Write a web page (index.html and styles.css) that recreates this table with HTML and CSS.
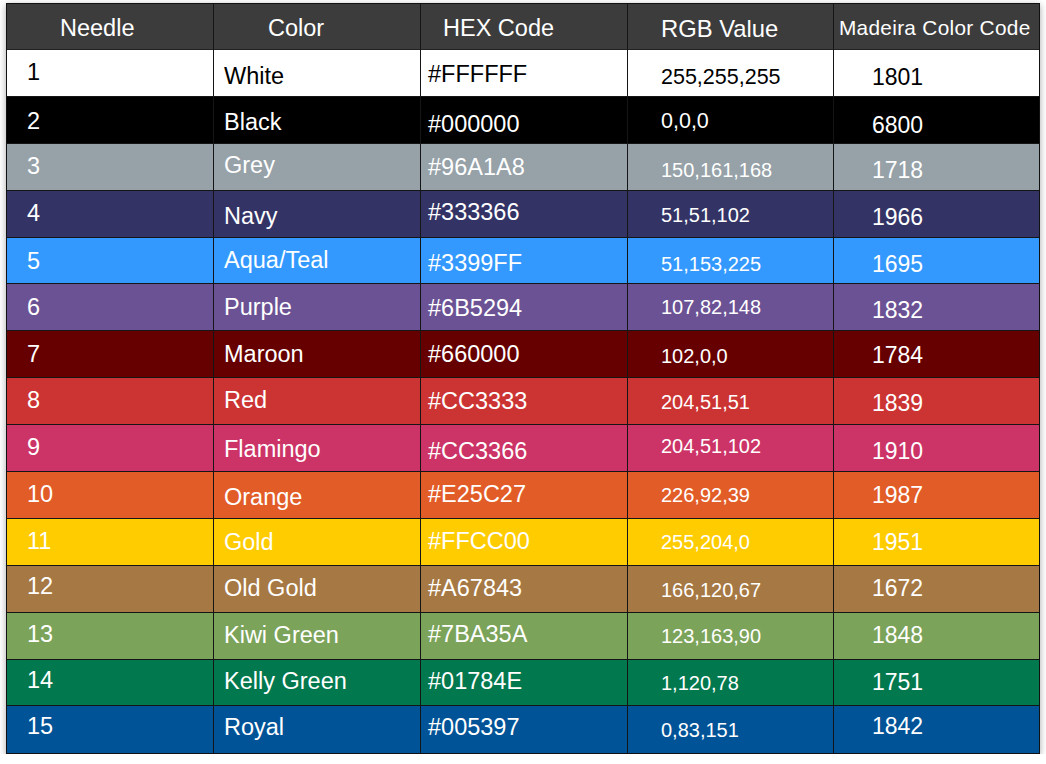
FILE: index.html
```html
<!DOCTYPE html>
<html>
<head>
<meta charset="utf-8">
<link rel="stylesheet" href="styles.css">
</head>
<body>
<div class="sheet">
  <div class="grid">
    <div class="cell head h1">Needle</div>
    <div class="cell head h2">Color</div>
    <div class="cell head h3">HEX Code</div>
    <div class="cell head h4">RGB Value</div>
    <div class="cell head h5">Madeira Color Code</div>

    <div class="cell c1 r1">1</div><div class="cell c2 r1 d4">White</div><div class="cell c3 r1 d2">#FFFFFF</div><div class="cell c4 r1 rgb-lg d5">255,255,255</div><div class="cell c5 r1 d5">1801</div>
    <div class="cell c1 r2 d2">2</div><div class="cell c2 r2 d3">Black</div><div class="cell c3 r2 d5">#000000</div><div class="cell c4 r2 rgb-lg d2">0,0,0</div><div class="cell c5 r2 d6">6800</div>
    <div class="cell c1 r3">3</div><div class="cell c2 r3 u1">Grey</div><div class="cell c3 r3 d1">#96A1A8</div><div class="cell c4 r3 d3">150,161,168</div><div class="cell c5 r3 d4">1718</div>
    <div class="cell c1 r4">4</div><div class="cell c2 r4 d3">Navy</div><div class="cell c3 r4 u1">#333366</div><div class="cell c4 r4 d1">51,51,102</div><div class="cell c5 r4 d4">1966</div>
    <div class="cell c1 r5 d1">5</div><div class="cell c2 r5">Aqua/Teal</div><div class="cell c3 r5 d3">#3399FF</div><div class="cell c4 r5 d3">51,153,225</div><div class="cell c5 r5 d4">1695</div>
    <div class="cell c1 r6">6</div><div class="cell c2 r6">Purple</div><div class="cell c3 r6 d1">#6B5294</div><div class="cell c4 r6">107,82,148</div><div class="cell c5 r6 d3">1832</div>
    <div class="cell c1 r7">7</div><div class="cell c2 r7">Maroon</div><div class="cell c3 r7">#660000</div><div class="cell c4 r7 d2">102,0,0</div><div class="cell c5 r7 d1">1784</div>
    <div class="cell c1 r8">8</div><div class="cell c2 r8">Red</div><div class="cell c3 r8 d1">#CC3333</div><div class="cell c4 r8 d1">204,51,51</div><div class="cell c5 r8 d2">1839</div>
    <div class="cell c1 r9">9</div><div class="cell c2 r9 d2">Flamingo</div><div class="cell c3 r9 d4">#CC3366</div><div class="cell c4 r9 u2">204,51,102</div><div class="cell c5 r9 d3">1910</div>
    <div class="cell c1 r10">10</div><div class="cell c2 r10 d3">Orange</div><div class="cell c3 r10">#E25C27</div><div class="cell c4 r10">226,92,39</div><div class="cell c5 r10 d1">1987</div>
    <div class="cell c1 r11">11</div><div class="cell c2 r11 d1">Gold</div><div class="cell c3 r11">#FFCC00</div><div class="cell c4 r11">255,204,0</div><div class="cell c5 r11 d1">1951</div>
    <div class="cell c1 r12 u2">12</div><div class="cell c2 r12">Old Gold</div><div class="cell c3 r12">#A67843</div><div class="cell c4 r12 d1">166,120,67</div><div class="cell c5 r12">1672</div>
    <div class="cell c1 r13 u1">13</div><div class="cell c2 r13">Kiwi Green</div><div class="cell c3 r13 u1">#7BA35A</div><div class="cell c4 r13">123,163,90</div><div class="cell c5 r13">1848</div>
    <div class="cell c1 r14 u2">14</div><div class="cell c2 r14 u1">Kelly Green</div><div class="cell c3 r14 u1">#01784E</div><div class="cell c4 r14">1,120,78</div><div class="cell c5 r14">1751</div>
    <div class="cell c1 r15 last u3">15</div><div class="cell c2 r15 last u2">Royal</div><div class="cell c3 r15 last u2">#005397</div><div class="cell c4 r15 last">0,83,151</div><div class="cell c5 r15 last u3">1842</div>
  </div>
</div>
</body>
</html>
```

FILE: styles.css
```css
html, body {
  margin: 0;
  padding: 0;
  background: #ffffff;
}

body {
  font-family: "Liberation Sans", Arial, Helvetica, sans-serif;
  color: #ffffff;
}

.sheet {
  padding: 3px 0 0 6px;
}

.grid {
  box-sizing: border-box;
  width: 1034px;
  border: 1px solid #111111;
  display: grid;
  grid-template-columns: 207px 207px 207px 206px 205px;
  grid-template-rows: 46px;
  grid-auto-rows: 46.9px;
  box-shadow: 0 2px 7px rgba(0, 0, 0, 0.35);
}

.cell {
  box-sizing: border-box;
  display: flex;
  align-items: center;
  border-right: 1px solid #151515;
  border-bottom: 1px solid #151515;
  font-size: 23.5px;
  line-height: 1;
  white-space: nowrap;
}

.c5, .h5 {
  border-right: none;
}

.last {
  border-bottom: none;
}

.head {
  background: #3c3c3c;
  color: #ffffff;
  padding-top: 4px;
  border-bottom: 1px solid #222222;
}

.h1 { padding-left: 53px; }
.h2 { padding-left: 54px; }
.h3 { padding-left: 22px; }
.h4 { padding-left: 33px; font-size: 23.8px; }
.h5 { padding-left: 5px; font-size: 20.8px; letter-spacing: 0.3px; }

.c1 { padding-left: 20px; }
.c2 { padding-left: 10px; }
.c3 { padding-left: 7px; }
.c4 { padding-left: 33px; font-size: 20px; }
.c5 { padding-left: 38px; font-size: 23px; }

.rgb-lg { font-size: 21.5px; }

/* small vertical nudges of cell text, as in the source sheet */
.d1 { padding-top: 2px; }
.d2 { padding-top: 4px; }
.d3 { padding-top: 6px; }
.d4 { padding-top: 8px; }
.d5 { padding-top: 10px; }
.d6 { padding-top: 12px; }
.u1 { padding-bottom: 2px; }
.u2 { padding-bottom: 4px; }
.u3 { padding-bottom: 6px; }

.r1 { background: #ffffff; color: #000000; }
.r2 { background: #000000; }
.r3 { background: #96a1a8; }
.r4 { background: #333366; }
.r5 { background: #3399ff; }
.r6 { background: #6b5294; }
.r7 { background: #660000; }
.r8 { background: #cc3333; }
.r9 { background: #cc3366; }
.r10 { background: #e25c27; }
.r11 { background: #ffcc00; }
.r12 { background: #a67843; }
.r13 { background: #7ba35a; }
.r14 { background: #01784e; }
.r15 { background: #005397; }
```
